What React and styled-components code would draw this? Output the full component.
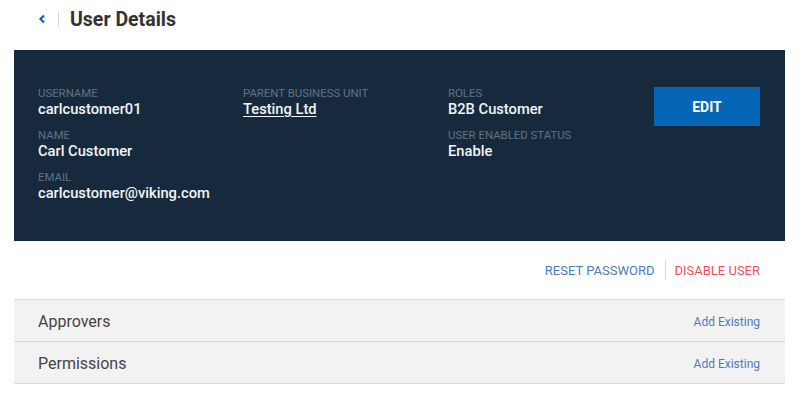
import React from "react";
import styled, { createGlobalStyle } from "styled-components";

const GlobalStyle = createGlobalStyle`
  body {
    margin: 0;
    background: #fff;
    font-family: Roboto, "Liberation Sans", sans-serif;
  }
`;

const Page = styled.div`
  width: 771px;
  padding: 0 15px 0 14px;
`;

const Header = styled.div`
  height: 38px;
  display: flex;
  align-items: center;
  padding-left: 24px;
`;

const Back = styled.span`
  display: flex;
  align-items: center;
  width: 10px;
  color: #0a67b2;
`;

const Divider = styled.span`
  width: 1px;
  height: 16px;
  background: #d9d9d9;
  margin: 0 11px 0 10px;
`;

const Title = styled.h1`
  margin: 0;
  font-size: 19.5px;
  font-weight: 700;
  color: #333;
`;

const Panel = styled.div`
  margin-top: 12px;
  height: 191px;
  background: #172a3d;
  padding: 36px 25px 0 24px;
  box-sizing: border-box;
  display: grid;
  grid-template-columns: 205px 205px 206px 1fr;
  align-items: start;
`;

const Column = styled.div`
  display: flex;
  flex-direction: column;
  gap: 9px;
`;

const Field = styled.div`
  display: flex;
  flex-direction: column;
`;

const Label = styled.span`
  font-size: 11.4px;
  line-height: 14px;
  color: #627184;
  text-transform: uppercase;
`;

const Value = styled.span`
  margin-top: -1px;
  font-size: 14.7px;
  line-height: 20px;
  font-weight: 500;
  color: #f3f4f6;
  text-decoration: ${(p) => (p.$link ? "underline" : "none")};
  text-decoration-thickness: 1px;
  text-underline-offset: 2px;
`;

const ButtonCell = styled.div`
  margin-top: 1px;
`;

const EditButton = styled.button`
  width: 106px;
  height: 39px;
  border: none;
  background: #0466b5;
  color: #fff;
  font-family: inherit;
  font-size: 14px;
  font-weight: 700;
  cursor: pointer;
`;

const Actions = styled.div`
  height: 58px;
  display: flex;
  align-items: center;
  justify-content: flex-end;
  padding-right: 25px;
`;

const Action = styled.a`
  font-size: 13px;
  color: ${(p) => (p.$danger ? "#e8525a" : "#4b7cb8")};
  cursor: pointer;
`;

const ActionSep = styled.span`
  width: 1px;
  height: 20px;
  background: #dadada;
  margin: 0 8px 0 11px;
`;

const List = styled.div`
  border-top: 1px solid #d9d9d9;
`;

const Row = styled.div`
  height: 42px;
  display: flex;
  align-items: center;
  justify-content: space-between;
  padding: 2px 25px 0 24px;
  box-sizing: border-box;
  background: #f2f2f2;
  border-bottom: 1px solid #d9d9d9;
`;

const RowTitle = styled.span`
  font-size: 16px;
  color: #444;
`;

const RowLink = styled.a`
  font-size: 12px;
  margin-top: 1px;
  color: #4b7cb8;
  cursor: pointer;
`;

const App = () => {
  return (
    <>
      <GlobalStyle />
      <Page>
        <Header>
          <Back>
            <svg width="8" height="10" viewBox="0 0 8 10">
              <path d="M6 1.5 L2.5 5 L6 8.5" fill="none" stroke="currentColor" strokeWidth="2.2" />
            </svg>
          </Back>
          <Divider />
          <Title>User Details</Title>
        </Header>
        <Panel>
          <Column>
            <Field>
              <Label>Username</Label>
              <Value>carlcustomer01</Value>
            </Field>
            <Field>
              <Label>Name</Label>
              <Value>Carl Customer</Value>
            </Field>
            <Field>
              <Label>Email</Label>
              <Value>carlcustomer@viking.com</Value>
            </Field>
          </Column>
          <Column>
            <Field>
              <Label>Parent Business Unit</Label>
              <Value $link>Testing Ltd</Value>
            </Field>
          </Column>
          <Column>
            <Field>
              <Label>Roles</Label>
              <Value>B2B Customer</Value>
            </Field>
            <Field>
              <Label>User Enabled Status</Label>
              <Value>Enable</Value>
            </Field>
          </Column>
          <ButtonCell>
            <EditButton>EDIT</EditButton>
          </ButtonCell>
        </Panel>
        <Actions>
          <Action>RESET PASSWORD</Action>
          <ActionSep />
          <Action $danger>DISABLE USER</Action>
        </Actions>
        <List>
          <Row>
            <RowTitle>Approvers</RowTitle>
            <RowLink>Add Existing</RowLink>
          </Row>
          <Row>
            <RowTitle>Permissions</RowTitle>
            <RowLink>Add Existing</RowLink>
          </Row>
        </List>
      </Page>
    </>
  );
};

export default App;
